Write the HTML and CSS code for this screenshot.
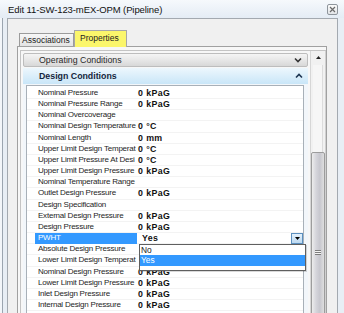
FILE: index.html
```html
<!DOCTYPE html>
<html lang="en">
<head>
    <meta charset="UTF-8">
    <title>Edit 11-SW-123-mEX-OPM (Pipeline)</title>
    <link rel="stylesheet" href="styles.css">
</head>
<body>
<div class="window">
    <div class="titlebar">
        <span class="title">Edit 11-SW-123-mEX-OPM (Pipeline)</span>
        <span class="close">
            <svg width="9" height="9" viewBox="0 0 9 9"><path d="M2 2 L7 7 M7 2 L2 7" stroke="#6b6b6b" stroke-width="1.2"/></svg>
        </span>
    </div>
    <div class="client">
        <div class="tabstrip">
            <div class="tab">Associations</div>
            <div class="tab active">Properties</div>
        </div>
        <div class="tabpage">
            <div class="scrollarea">
                <div class="groups">
                    <div class="grouphead closed">
                        <span>Operating Conditions</span>
                        <svg width="8" height="6" viewBox="0 0 8 6"><path d="M1 1.5 L4 4.5 L7 1.5" fill="none" stroke="#333" stroke-width="1.6"/></svg>
                    </div>
                    <div class="grouphead open">
                        <span>Design Conditions</span>
                        <svg width="8" height="6" viewBox="0 0 8 6"><path d="M1 4.5 L4 1.5 L7 4.5" fill="none" stroke="#1d3552" stroke-width="1.6"/></svg>
                    </div>
                    <div class="groupbody">
                        <div class="proplist">
                            <div class="row"><span class="lbl">Nominal Pressure</span><span class="val">0 kPaG</span></div>
                            <div class="row"><span class="lbl">Nominal Pressure Range</span><span class="val">0 kPaG</span></div>
                            <div class="row"><span class="lbl">Nominal Overcoverage</span><span class="val"></span></div>
                            <div class="row"><span class="lbl">Nominal Design Temperature</span><span class="val">0 °C</span></div>
                            <div class="row"><span class="lbl">Nominal Length</span><span class="val">0 mm</span></div>
                            <div class="row"><span class="lbl">Upper Limit Design Temperat</span><span class="val">0 °C</span></div>
                            <div class="row"><span class="lbl">Upper Limit Pressure At Desi</span><span class="val">0 °C</span></div>
                            <div class="row"><span class="lbl">Upper Limit Design Pressure</span><span class="val">0 kPaG</span></div>
                            <div class="row"><span class="lbl">Nominal Temperature Range</span><span class="val"></span></div>
                            <div class="row"><span class="lbl">Outlet Design Pressure</span><span class="val">0 kPaG</span></div>
                            <div class="row"><span class="lbl">Design Specification</span><span class="val"></span></div>
                            <div class="row"><span class="lbl">External Design Pressure</span><span class="val">0 kPaG</span></div>
                            <div class="row"><span class="lbl">Design Pressure</span><span class="val">0 kPaG</span></div>
                            <div class="row selected">
                                <span class="lbl">PWHT</span>
                                <span class="val combo">Yes<span class="dropbtn"><svg width="5" height="3" viewBox="0 0 5 3"><path d="M0 0 H5 L2.5 3 Z" fill="#000"/></svg></span></span>
                                <div class="droplist">
                                    <div class="item">No</div>
                                    <div class="item hot">Yes</div>
                                </div>
                            </div>
                            <!-- values of the next two rows are hidden under the open list -->
                            <div class="row"><span class="lbl">Absolute Design Pressure</span><span class="val"></span></div>
                            <div class="row"><span class="lbl">Lower Limit Design Temperat</span><span class="val"></span></div>
                            <div class="row"><span class="lbl">Nominal Design Pressure</span><span class="val">0 kPaG</span></div>
                            <div class="row"><span class="lbl">Lower Limit Design Pressure</span><span class="val">0 kPaG</span></div>
                            <div class="row"><span class="lbl">Inlet Design Pressure</span><span class="val">0 kPaG</span></div>
                            <div class="row"><span class="lbl">Internal Design Pressure</span><span class="val">0 kPaG</span></div>
                        </div>
                    </div>
                </div>
                <div class="vscroll">
                    <div class="uparrow"><svg width="5" height="3" viewBox="0 0 5 3"><path d="M0 3 H5 L2.5 0 Z" fill="#222"/></svg></div>
                    <div class="track"></div>
                    <div class="thumb"><span class="grip"></span></div>
                </div>
            </div>
        </div>
    </div>
</div>
</body>
</html>
```

FILE: styles.css
```css
body{margin:0; font-family:"Liberation Sans", Arial, sans-serif;}
.window{width:344px; height:313px; overflow:hidden; display:flex; flex-direction:column; background:#e8eef5; box-shadow:inset 2px 0 0 #f3f6fa, inset 3px 0 0 #9ba5b0;}

.titlebar{height:18px; flex:none; display:flex; align-items:center; justify-content:space-between; padding:0 6px 0 8px; background:linear-gradient(#f6f9fc, #e4ecf5);}
.title{font-size:9.5px; color:#111; letter-spacing:-0.1px; padding-top:1px;}
.close{width:9px; height:9px; border:1px solid #8e959c; border-radius:2px; background:linear-gradient(#fbfbfb, #e2e5e8); display:flex;}

.client{flex:1; margin:0 6px 0 7px; border:1px solid #a3a9b0; border-bottom:none; background:#f0f0f0; display:flex; flex-direction:column; min-height:0;}

.tabstrip{display:flex; align-items:flex-end; padding:10px 0 0 11px; height:17px; flex:none;}
.tab{height:12px; width:51px; border:1px solid #9b9b9b; border-bottom:none; background:linear-gradient(#f7f7f7, #e3e3e3); font-size:8.5px; color:#222; padding-left:2px; line-height:13px;}
.tab.active{height:16px; width:46px; background:#fbf66b; border-color:#a7a7a7; padding-left:5px; line-height:15px; margin-bottom:-1px; position:relative;}

.tabpage{flex:1; margin:0 10px 0 9px; border:1px solid #a0a0a0; border-bottom:none; background:#f7f7f7; padding:3px 0 0 2px; min-height:0;}
.scrollarea{display:flex; height:100%; border-top:1px solid #c4c4c4; border-left:1px solid #c4c4c4;}
.groups{flex:1; padding:2px 2px 0 2px;}

.grouphead{display:flex; align-items:center; justify-content:space-between; padding:0 5px 0 15px; font-size:8.8px;}
.grouphead.closed{height:12px; border:1px solid #bdbdbd; border-radius:2px; background:linear-gradient(#f5f5f5, #d8d8d8); color:#2a2a2a;}
.grouphead.open{height:16px; margin-top:1px; padding-left:16px; background:linear-gradient(#edf7fd, #c9e6f8); color:#15263d; font-weight:bold; font-size:8.8px;}

.groupbody{padding:1px 4px 0 3px; background:#f2f6fa;}
.proplist{border:1px solid #a8b0b8; border-bottom:none; background:#fff; padding-top:2px; height:240px;}

.row{height:11.16px; display:grid; grid-template-columns:8px 102px 1fr; position:relative; box-sizing:border-box; border-bottom:1px solid #f3f3f3;}
.lbl{grid-column:2; font-size:8px; letter-spacing:-0.22px; color:#1e1e1e; padding-left:3px; line-height:10.5px; white-space:nowrap; overflow:hidden;}
.val{font-size:8.8px; font-weight:bold; letter-spacing:0.4px; color:#111; padding-left:1px; line-height:10.5px; white-space:nowrap;}
.selected .lbl{background:#3399ff; color:#fff;}
.combo{display:flex; justify-content:space-between; padding-left:5px;}
.dropbtn{width:10px; height:9px; border:1px solid #5b8fbf; background:linear-gradient(#e4f1fc, #bcd9f1); display:flex; align-items:center; justify-content:center;}

.droplist{position:absolute; left:112px; top:11px; width:165px; border:1px solid #5f5f5f; background:#fff; padding-bottom:4px; z-index:2; box-shadow:1px 1px 0 rgba(0,0,0,0.15);}
.item{font-size:8.4px; color:#222; padding-left:1px; height:10px; line-height:10px;}
.item.hot{height:11.4px; line-height:11.4px; background:#3399ff; color:#fff;}

.vscroll{width:14px; flex:none; position:relative; background:#f1f1f1; border-left:1px solid #d6d6d6; border-right:1px solid #d0d0d0;}
.uparrow{height:12px; display:flex; justify-content:center; align-items:center;}
.track{position:absolute; left:2px; right:2px; top:14px; height:87px; border-right:1px solid #dcdcdc; background:#f6f6f6;}
.thumb{position:absolute; left:0; right:0; top:101px; height:200px; border:1px solid #9c9c9c; border-radius:2px; box-sizing:border-box; background:linear-gradient(to right, #ececec, #d4d4da 35%, #c7c7ce 65%, #dedede);}
.grip{position:absolute; left:3px; top:97px; width:6px; height:5px; background:repeating-linear-gradient(#7d7d7d 0 1px, #f4f4f4 1px 2px);}
```
